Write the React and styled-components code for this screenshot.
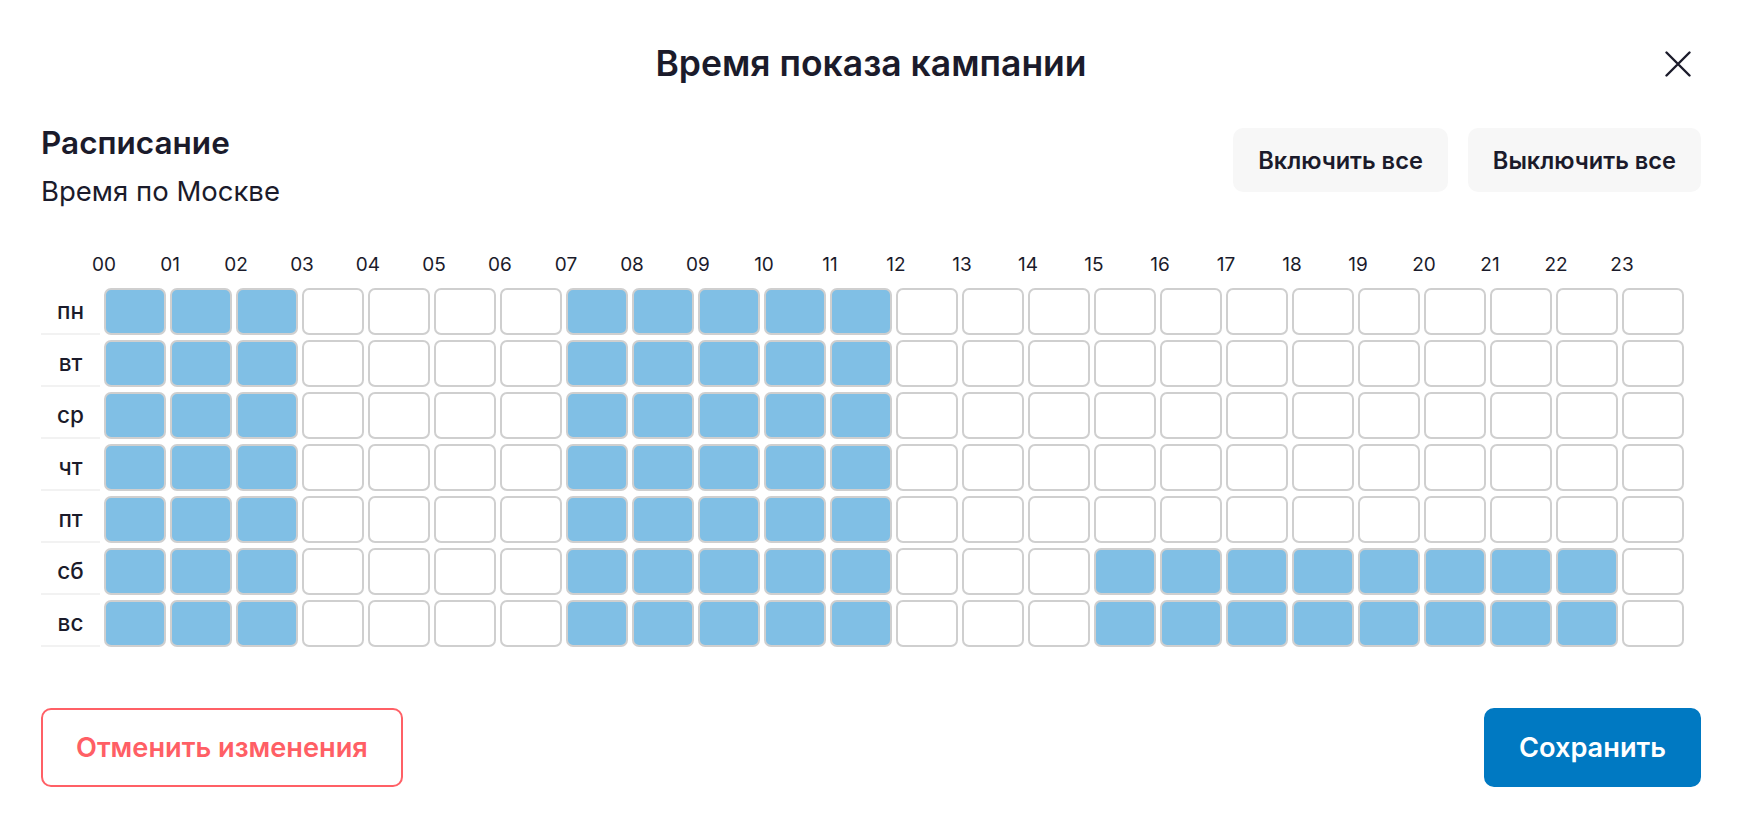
import React, { useState } from 'react'
import styled, { createGlobalStyle } from 'styled-components'

const GlobalStyle = createGlobalStyle`
    html, body {
        margin:0;
        padding:0;
        background:#ffffff;
    }
    body {
        font-family:Inter, "Noto Sans", sans-serif;
        color:#1b1b2b;
    }
    * {
        box-sizing:border-box;
    }
`;

const Page = styled.div`
    width:1742px;
    height:828px;
    padding:41px;
    display:flex;
    flex-direction:column;
    background:#ffffff;
`;

const TitleBar = styled.div`
    height:46px;
    display:grid;
    grid-template-columns:46px 1fr 46px;
    align-items:center;
    .title{
        text-align:center;
        font-size:35.5px;
        font-weight:600;
        line-height:46px;
        color:#1b1b2b;
    }
`;

const CloseButton = styled.button`
    width:46px;
    height:46px;
    padding:0;
    border:none;
    background:transparent;
    display:flex;
    justify-content:center;
    align-items:center;
    cursor:pointer;
`;

const Header = styled.div`
    margin-top:38px;
    display:flex;
    justify-content:space-between;
    align-items:flex-start;
    .heading{
        font-size:31.5px;
        font-weight:600;
        line-height:36px;
    }
    .sub{
        margin-top:14px;
        font-size:27.5px;
        font-weight:400;
        line-height:32px;
    }
`;

const ToggleGroup = styled.div`
    margin-top:3px;
    display:flex;
    gap:20px;
`;

const GhostButton = styled.button`
    height:64px;
    padding:0 25px;
    border:none;
    border-radius:10px;
    background:#f7f7f7;
    font-family:Inter, sans-serif;
    font-size:23.6px;
    font-weight:600;
    color:#1b1b2b;
    cursor:pointer;
`;

const HourRow = styled.div`
    margin-top:47px;
    padding-left:30px;
    display:grid;
    grid-template-columns:repeat(24, 66px);
    .hour{
        text-align:center;
        font-size:19px;
        line-height:22px;
    }
`;

const Grid = styled.div`
    margin-top:12px;
    display:grid;
    grid-template-columns:59px repeat(24, 62px);
    grid-auto-rows:47px;
    column-gap:4px;
    row-gap:5px;
`;

const DayLabel = styled.div`
    display:flex;
    justify-content:center;
    align-items:center;
    border-bottom:2px solid #f2f2f2;
    font-size:22.5px;
    font-weight:500;
`;

const Cell = styled.div`
    border:2px solid #cfcfcf;
    border-radius:7px;
    background:${props => props.$on ? '#80bfe5' : '#ffffff'};
    cursor:pointer;
`;

const Footer = styled.div`
    margin-top:auto;
    display:flex;
    justify-content:space-between;
`;

const ActionButton = styled.button`
    height:79px;
    padding:0 33px;
    border-radius:10px;
    font-family:Inter, sans-serif;
    font-size:27.2px;
    font-weight:600;
    cursor:pointer;
    border:2px solid ${props => props.$primary ? '#0079c2' : '#ff6066'};
    background:${props => props.$primary ? '#0079c2' : '#ffffff'};
    color:${props => props.$primary ? '#ffffff' : '#ff5f65'};
`;

const DAYS = ["пн", "вт", "ср", "чт", "пт", "сб", "вс"];
const HOURS = Array.from({ length: 24 }, (_, i) => String(i).padStart(2, "0"));

const weekday = [0, 1, 2, 7, 8, 9, 10, 11];
const weekend = [...weekday, 15, 16, 17, 18, 19, 20, 21, 22];

function initial() {
    return DAYS.map((_, d) => {
        const on = d < 5 ? weekday : weekend;
        return HOURS.map((_, h) => on.includes(h));
    });
}

export default function App() {
    const [schedule, setSchedule] = useState(initial);

    const toggle = (d, h) => {
        setSchedule(s => s.map((row, i) => i !== d ? row : row.map((v, j) => j === h ? !v : v)));
    };
    const setAll = (value) => setSchedule(DAYS.map(() => HOURS.map(() => value)));

    return (
        <React.Fragment>
            <GlobalStyle />
            <Page>
                <TitleBar>
                    <div />
                    <div className="title">Время показа кампании</div>
                    <CloseButton aria-label="Закрыть">
                        <svg width="26" height="26" viewBox="0 0 26 26">
                            <path d="M1.5 1.5 24.5 24.5M24.5 1.5 1.5 24.5" stroke="#1b1b2b" strokeWidth="2.4" strokeLinecap="round" fill="none" />
                        </svg>
                    </CloseButton>
                </TitleBar>
                <Header>
                    <div>
                        <div className="heading">Расписание</div>
                        <div className="sub">Время по Москве</div>
                    </div>
                    <ToggleGroup>
                        <GhostButton onClick={() => setAll(true)}>Включить все</GhostButton>
                        <GhostButton onClick={() => setAll(false)}>Выключить все</GhostButton>
                    </ToggleGroup>
                </Header>
                <HourRow>
                    {HOURS.map(h => <div className="hour" key={h}>{h}</div>)}
                </HourRow>
                <Grid>
                    {DAYS.map((day, d) => (
                        <React.Fragment key={day}>
                            <DayLabel>{day}</DayLabel>
                            {schedule[d].map((on, h) => (
                                <Cell key={h} $on={on} onClick={() => toggle(d, h)} />
                            ))}
                        </React.Fragment>
                    ))}
                </Grid>
                <Footer>
                    <ActionButton>Отменить изменения</ActionButton>
                    <ActionButton $primary>Сохранить</ActionButton>
                </Footer>
            </Page>
        </React.Fragment>
    )
}
